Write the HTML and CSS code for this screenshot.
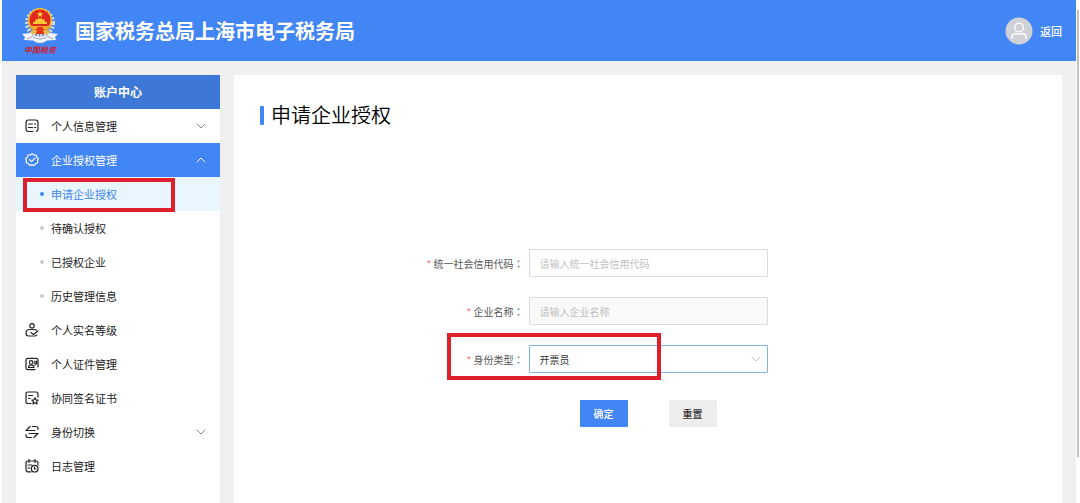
FILE: index.html
```html
<!DOCTYPE html>
<html lang="zh-CN">
<head>
<meta charset="utf-8">
<title>国家税务总局上海市电子税务局</title>
<link rel="stylesheet" href="styles.css">
</head>
<body>
<div class="app">
  <header class="topbar">
    <svg class="emblem" viewBox="0 0 40 50" role="img" aria-label="中国税务">
      <circle cx="20" cy="17" r="13" fill="#71839c"/>
      <circle cx="20" cy="17" r="13" fill="none" stroke="#d8dce2" stroke-width="4" stroke-dasharray="2 1.6"/>
      <circle cx="20" cy="14" r="12" fill="#f3b52c"/>
      <circle cx="20" cy="14" r="10.500" fill="#dd2a1c"/>
      <path d="M20 5l1 2.300h2.400l-1.900 1.500.7 2.400-2.200-1.400-2.200 1.400.7-2.400-1.900-1.500H19z" fill="#ffd23c"/>
      <path d="M13 18v-2h2v-2l5-2 5 2v2h2v2z" fill="#ffc832"/>
      <path d="M10.500 20h19l-3 3h-13z" fill="#f2a929"/>
      <path d="M17.500 21h5l2 7h-9z" fill="#e9341d"/>
      <path d="M12 24l5 1-2 4-5-2zM28 24l-5 1 2 4 5-2z" fill="#e8b74d"/>
      <path d="M2 28l8-1q10 7 20 0l8 1-3 3 1 3-9 .500q-7 5-14 0L4 34l1-3z" fill="#f1f3f5"/>
      <path d="M7 33q6-2 6-4M33 33q-6-2-6-4M13 31q7 4 14 0" fill="none" stroke="#9aa8ba"/>
      <text class="emblem-text" x="20" y="47" text-anchor="middle">中国税务</text>
    </svg>
    <h1 class="brand">国家税务总局上海市电子税务局</h1>
    <a class="back" href="#">
      <svg class="avatar" viewBox="0 0 28 28" aria-hidden="true">
        <circle cx="14" cy="14" r="13.500" fill="#cfd1d6"/>
        <g fill="none" stroke="#fff" stroke-width="1.300"><circle cx="14" cy="10.500" r="4.300"/><path d="M7 22v-2.500q0-2.700 3-2.700h8q3 0 3 2.700V22"/></g>
      </svg>
      <span>返回</span>
    </a>
  </header>

  <div class="body">
    <nav class="sidebar">
      <h2 class="side-title">账户中心</h2>
      <a class="item" href="#">
        <svg class="icon" viewBox="0 0 14 14"><path d="M8 12.500H3.500Q1 12.500 1 10V3.500Q1 1 3.500 1h7Q13 1 13 3.500V10q0 2-1.500 2.400M3.500 5h4M9.500 5h1.200M3.500 8.500h4M9.500 8.500h1.200"/></svg>
        <span>个人信息管理</span>
        <svg class="arrow" viewBox="0 0 10 10"><path d="M1 3l4 4 4-4"/></svg>
      </a>
      <a class="item open" href="#">
        <svg class="icon" viewBox="0 0 14 14"><path d="M7 .700L8.800 2l2.200 0 .600 2.100L13.300 5.500 12.600 7.500l.1 2.200-2.100.800L9.200 12.300 7 11.800l-2.200.500-1.400-1.800-2.100-.800.1-2.200L.700 5.500 2.400 4.100 3 2h2.200zM4.500 6.700l2 2L10 5.200"/></svg>
        <span>企业授权管理</span>
        <svg class="arrow" viewBox="0 0 10 10"><path d="M1 7l4-4 4 4"/></svg>
      </a>
      <a class="sub current" href="#">申请企业授权</a>
      <a class="sub" href="#">待确认授权</a>
      <a class="sub" href="#">已授权企业</a>
      <a class="sub" href="#">历史管理信息</a>
      <a class="item" href="#">
        <svg class="icon" viewBox="0 0 14 14"><circle cx="7" cy="2.800" r="2.200"/><path d="M11.500 7.200Q10.500 6.500 8.500 6.500H5Q1 6.500 1 10 1 13 3.500 13h6q1.500 0 2.300-.800M6 9.500l2.500 2L13 8"/></svg>
        <span>个人实名等级</span>
      </a>
      <a class="item" href="#">
        <svg class="icon" viewBox="0 0 14 14"><path d="M10 12.700H3Q1 12.700 1 10.700V3.300Q1 1.300 3 1.300h8q2 0 2 2V10M3.500 10.500q0-2.500 2.700-2.500T9 10.500zM10 4v4M11.500 4v3"/><circle cx="6.200" cy="5.500" r="1.800"/></svg>
        <span>个人证件管理</span>
      </a>
      <a class="item" href="#">
        <svg class="icon" viewBox="0 0 14 14"><path d="M6 12.500H3Q1 12.500 1 10.500V3Q1 1 3 1h8q2 0 2 2v3M3.500 4.500h4M3.500 7.500h1.500M10 6.800l1 2 2.200.300-1.600 1.500.4 2.300-2-1.100-2 1.100.4-2.300-1.600-1.500L9 8.800z"/></svg>
        <span>协同签名证书</span>
      </a>
      <a class="item" href="#">
        <svg class="icon" viewBox="0 0 14 14"><path d="M5 1.500L1 5.500h9M7.500 1.500H11q2 0 2 2v1M9 12.500l4-4H4M6.500 12.500H3q-2 0-2-2v-1"/></svg>
        <span>身份切换</span>
        <svg class="arrow" viewBox="0 0 10 10"><path d="M1 3l4 4 4-4"/></svg>
      </a>
      <a class="item" href="#">
        <svg class="icon" viewBox="0 0 14 14"><path d="M6 12.800H3q-2 0-2-2V4q0-2 2-2h8q2 0 2 2v2M4 .500v3M10 .500v3M3 6h4M3 9h2"/><circle cx="9.700" cy="9.700" r="3.300"/><path d="M9.500 8v2h1.500"/></svg>
        <span>日志管理</span>
      </a>
    </nav>

    <main class="panel">
      <h2 class="page-title">申请企业授权</h2>
      <form class="form">
        <div class="row">
          <label for="code"><span class="req">*</span> 统一社会信用代码<span class="colon" lang="zh-TW">：</span></label>
          <input id="code" class="field" type="text" placeholder="请输入统一社会信用代码">
        </div>
        <div class="row">
          <label for="company"><span class="req">*</span> 企业名称<span class="colon" lang="zh-TW">：</span></label>
          <input id="company" class="field" type="text" placeholder="请输入企业名称" disabled>
        </div>
        <div class="row marked">
          <label for="role"><span class="req">*</span> 身份类型<span class="colon" lang="zh-TW">：</span></label>
          <div class="select-wrap">
            <select id="role" class="field active"><option>开票员</option></select>
            <svg class="caret" viewBox="0 0 10 10" aria-hidden="true"><path d="M1 3l4 4 4-4"/></svg>
          </div>
        </div>
        <div class="actions">
          <button class="btn primary" type="submit">确定</button>
          <button class="btn" type="reset">重置</button>
        </div>
      </form>
    </main>
  </div>
  <div class="scroll-thumb"></div>
</div>
</body>
</html>
```
FILE: styles.css
```css
*, *::before, *::after { box-sizing: border-box; }

body {
  margin: 0;
  background: #fff;
  color: #222;
  font-family: "Noto Sans CJK SC", sans-serif;
  font-size: 11px;
}

h1, h2 { margin: 0; }
a { color: inherit; text-decoration: none; }

.app {
  position: relative;
  display: flex;
  flex-direction: column;
  min-height: 100vh;
  padding: 0 4px 0 2px;
}

.topbar {
  display: flex;
  align-items: center;
  height: 61px;
  padding: 0 14px 0 18px;
  background: #4285f4;
  color: #fff;
}

.emblem { width: 40px; height: 50px; }
.emblem-text {
  fill: #c81e32;
  font-family: "Noto Sans CJK SC", sans-serif;
  font-size: 8px;
  font-style: italic;
  font-weight: 700;
}

.brand {
  margin-left: 15px;
  font-size: 20px;
  line-height: 28px;
  font-weight: 700;
}

.back {
  display: flex;
  align-items: center;
  gap: 7px;
  margin-left: auto;
  font-weight: 500;
}
.avatar { width: 28px; height: 28px; }

.body {
  display: flex;
  flex: 1;
  gap: 14px;
  padding: 14px 14px 0;
  background: #f0f0f3;
}

.sidebar {
  flex: none;
  width: 204px;
  background: #fff;
}

.side-title {
  background: #3d77d8;
  color: #fff;
  font-size: 12px;
  line-height: 34px;
  text-align: center;
}

.item {
  display: flex;
  align-items: center;
  height: 34px;
  padding: 0 14px 0 9px;
}
.item.open { background: #4285f4; color: #fff; }

.icon, .arrow, .caret {
  fill: none;
  stroke: currentColor;
  stroke-linecap: round;
  stroke-linejoin: round;
}
.icon { width: 14px; height: 14px; margin-right: 12px; stroke-width: 1.2; }
.arrow { width: 10px; height: 10px; margin-left: auto; stroke-width: 1; color: #888; }
.open .arrow { color: #fff; }

.sub {
  position: relative;
  display: flex;
  align-items: center;
  gap: 7px;
  height: 34px;
  padding-left: 24px;
}
.sub::before {
  content: "";
  width: 4px;
  height: 4px;
  border-radius: 50%;
  background: #ccc;
}
.sub.current { background: #eaf6fe; color: #4285f4; }
.sub.current::before { background: #4285f4; }
.sub.current::after {
  content: "";
  position: absolute;
  inset: 1px 45px -1px 7px;
  border: 4px solid #df202b;
}

.panel {
  flex: 1;
  background: #fff;
}

.page-title {
  display: flex;
  align-items: center;
  gap: 7px;
  padding: 25px 26px 0;
  color: #000;
  font-size: 20px;
  line-height: 30px;
  font-weight: 350;
}
.page-title::before {
  content: "";
  width: 4px;
  height: 19px;
  border-radius: 1px;
  background: #4285f4;
}

.form {
  display: flex;
  flex-direction: column;
  gap: 20px;
  padding-top: 119px;
  font-size: 10px;
}

.row {
  position: relative;
  display: grid;
  grid-template-columns: 1fr 239px 1fr;
  align-items: center;
}
.row label {
  padding-right: 5px;
  color: #555;
  text-align: right;
}
.req { color: #f56c6c; }
.colon { font-family: "Noto Sans CJK TC", sans-serif; }

.field {
  width: 100%;
  height: 28px;
  padding: 0 10px;
  border: 1px solid #dcdcdc;
  border-radius: 1px;
  background: #fff;
  color: #333;
  font: inherit;
  appearance: none;
}
.field::placeholder { color: #bfbfbf; }
.field:disabled { background: #f9f9f9; }
.field.active { display: block; border-color: #7eb4ea; }

.select-wrap { position: relative; }
.caret {
  position: absolute;
  top: 9px;
  right: 7px;
  width: 10px;
  height: 10px;
  color: #c0c4cc;
}

.marked::after {
  content: "";
  position: absolute;
  top: -12px;
  bottom: -7px;
  left: calc(50% - 201px);
  width: 214px;
  border: 4px solid #df202b;
}

.actions {
  display: flex;
  justify-content: center;
  gap: 41px;
  padding-top: 7px;
}

.btn {
  width: 48px;
  height: 27px;
  padding: 0;
  border: 0;
  border-radius: 1px;
  background: #ededed;
  color: #333;
  font: inherit;
  font-weight: 500;
}
.btn.primary { background: #4285f4; color: #fff; }

.scroll-thumb {
  position: absolute;
  top: 10px;
  right: 1px;
  width: 2px;
  height: 447px;
  background: #c1c1c1;
}
```
